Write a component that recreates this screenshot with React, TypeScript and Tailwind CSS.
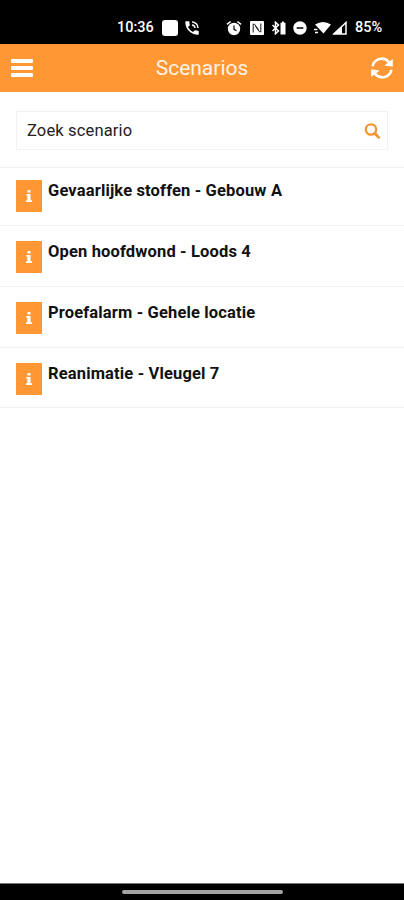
import { MdDoNotDisturbOn, MdPhoneInTalk } from 'react-icons/md';

interface Scenario {
  id: number;
  title: string;
  rowClass: string;
}

const scenarios: Scenario[] = [
  { id: 1, title: 'Gevaarlijke stoffen - Gebouw A', rowClass: 'h-[58px] pt-[12px]' },
  { id: 2, title: 'Open hoofdwond - Loods 4', rowClass: 'h-[61px] pt-[15px]' },
  { id: 3, title: 'Proefalarm - Gehele locatie', rowClass: 'h-[61px] pt-[15px]' },
  { id: 4, title: 'Reanimatie - Vleugel 7', rowClass: 'h-[60px] pt-[15px]' },
];

function StatusBar() {
  return (
    <div className="flex h-11 shrink-0 items-center bg-black pt-[11px] pl-[117px] text-white">
      <span className="w-[45px] text-[14.5px] font-medium whitespace-nowrap">10:36</span>
      <span className="h-4 w-4 rounded-[3px] bg-white" />
      <MdPhoneInTalk className="ml-[5px] h-[18px] w-[18px]" />
      {/* Alarm */}
      <svg viewBox="0 0 16 16" className="ml-[25px] h-4 w-4">
        <circle cx="8" cy="9" r="6.2" fill="currentColor" />
        <path d="M1 4.4 4.6 1.5M15 4.4 11.4 1.5" stroke="currentColor" strokeWidth="1.6" />
        <path d="M8 5.5v3.8l2.5 1.5" fill="none" stroke="#000" strokeWidth="1.2" />
      </svg>
      {/* NFC */}
      <svg viewBox="0 0 14 14" className="ml-[8px] h-[14px] w-[14px]">
        <rect width="14" height="14" rx="1" fill="currentColor" />
        <path d="M3.2 11.5V3.2h1.3l4 5.3M10.8 2.5v8.3H9.5l-4-5.3" fill="none" stroke="#000" strokeWidth="0.9" />
      </svg>
      {/* Bluetooth with device battery */}
      <svg viewBox="0 0 15 14" className="ml-[7px] h-[14px] w-[15px]">
        <path d="m1.5 4 6 6L4.5 12.8V1.2L7.5 4l-6 6" fill="none" stroke="currentColor" strokeWidth="1.5" />
        <path d="M11 .5h2v1.3h1.5V13.500h-5V1.800H11z" fill="currentColor" />
      </svg>
      <MdDoNotDisturbOn className="ml-[6px] h-4 w-4" />
      <svg viewBox="0 0 18 14" className="ml-[6px] h-[14px] w-[18px]">
        <path d="M1 3.5Q9-1.500 17 3.500L9.500 12.500z" fill="currentColor" />
        <path d="M0 8.5h3.5M1 11.5h3" stroke="currentColor" strokeWidth="1.3" />
      </svg>
      <svg viewBox="0 0 15 14" className="h-[14px] w-[15px]">
        <path d="M14 1.5V13H2z" fill="none" stroke="currentColor" strokeWidth="1.5" />
        <path d="M10 4.5V13H1z" fill="currentColor" />
      </svg>
      <span className="ml-[8px] text-[14.5px] font-medium">85%</span>
    </div>
  );
}

function RefreshIcon() {
  return (
    <svg viewBox="0 0 22 22" className="h-[22px] w-[22px]">
      <path d="M1.6 9.3A9.3 9.3 0 0 1 18 5.2M20.4 12.7A9.3 9.3 0 0 1 4 16.8" fill="none" stroke="currentColor" strokeWidth="2.6" />
      <path d="M21.8 2v7.8L13.3 8.6zM.2 20v-7.8l8.5 1.2z" fill="currentColor" />
    </svg>
  );
}

function InfoBadge() {
  return (
    <span className="flex h-[32px] w-[26px] shrink-0 items-center justify-center bg-[#ff9734] text-white">
      <svg viewBox="0 0 6 12" className="h-3 w-1.5">
        <path d="M1.5 0h3v2.5h-3zM.3 4h4.3v6.2H6V12H0v-1.8h1.3V5.8h-1z" fill="currentColor" />
      </svg>
    </span>
  );
}

export default function App() {
  return (
    <div className="flex h-[900px] w-[404px] flex-col overflow-hidden bg-white font-['Roboto',sans-serif] text-[#111]">
      <StatusBar />

      {/* Header */}
      <header className="flex h-12 shrink-0 items-center justify-between bg-[#ff9734] px-[11px] text-white">
        <button className="flex w-[22px] flex-col gap-[3px]" aria-label="Menu">
          <span className="h-1 w-full rounded-[1px] bg-white" />
          <span className="h-1 w-full rounded-[1px] bg-white" />
          <span className="h-1 w-full rounded-[1px] bg-white" />
        </button>
        <h1 className="pt-[2px] text-[21px] text-[#fff4e6]">Scenarios</h1>
        <button aria-label="Refresh">
          <RefreshIcon />
        </button>
      </header>

      {/* Search */}
      <div className="h-[75px] shrink-0 px-4 pt-[19px]">
        <div className="flex h-[39px] items-center justify-between border border-[#f2f2f2] pr-[7px] pl-[10px]">
          <span className="pt-[2px] text-[16.5px] tracking-[0.15px] text-[#222]">Zoek scenario</span>
          <svg viewBox="0 0 16 16" className="h-4 w-4 text-[#f59432]">
            <circle cx="7" cy="6.5" r="5.2" fill="none" stroke="currentColor" strokeWidth="2.3" />
            <path d="m10.7 10.2 4 4.2" stroke="currentColor" strokeWidth="2.7" strokeLinecap="round" />
          </svg>
        </div>
      </div>

      {/* Scenario list */}
      <ul className="border-b border-[#f2f2f2]">
        {scenarios.map((scenario) => (
          <li key={scenario.id} className={`flex items-start border-t border-[#f2f2f2] px-4 ${scenario.rowClass}`}>
            <InfoBadge />
            <span className="ml-[6px] text-[16.5px] leading-[21px] font-bold tracking-[0.15px]">{scenario.title}</span>
          </li>
        ))}
      </ul>

      {/* Gesture bar */}
      <div className="mt-auto flex h-[17px] shrink-0 justify-center border-t border-[#777] bg-black pt-[6px]">
        <span className="h-1 w-[161px] rounded-full bg-[#a3a3a3]" />
      </div>
    </div>
  );
}
